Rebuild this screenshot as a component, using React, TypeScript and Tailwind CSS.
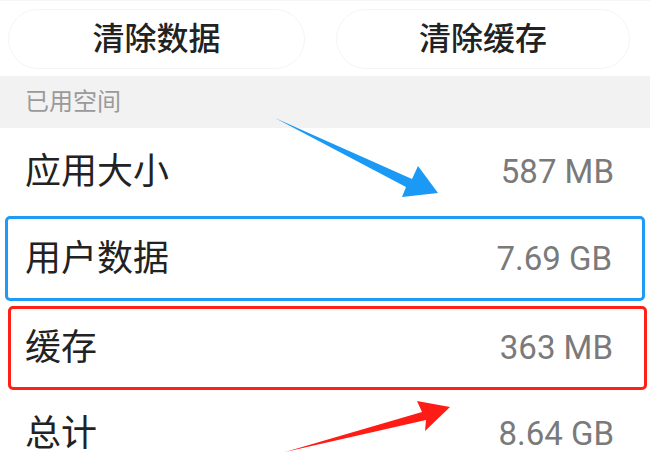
import React from "react";

const rows = [
  { label: "应用大小", value: "587 MB", frame: "none" },
  { label: "用户数据", value: "7.69 GB", frame: "blue" },
  { label: "缓存", value: "363 MB", frame: "red" },
  { label: "总计", value: "8.64 GB", frame: "none" },
] as const;

function Row({ label, value, frame }: (typeof rows)[number]) {
  if (frame === "blue") {
    return (
      <div className="mx-[5px] flex h-[85px] items-center justify-between rounded-[5px] border-[3px] border-[#1e9bf5] pl-[17px] pr-[30px]">
        <span className="text-[36px] text-[#222]">{label}</span>
        <span className="text-[33px] text-[#7a7a7a]">{value}</span>
      </div>
    );
  }
  if (frame === "red") {
    return (
      <div className="ml-[8px] mr-[3px] mt-[5px] flex h-[84px] items-center justify-between rounded-[5px] border-[3px] border-[#ff2118] pl-[14px] pr-[31px]">
        <span className="text-[36px] text-[#222]">{label}</span>
        <span className="text-[33px] text-[#7a7a7a]">{value}</span>
      </div>
    );
  }
  return (
    <div className="flex h-[88px] items-center justify-between pl-[25px] pr-[36px]">
      <span className="text-[36px] text-[#222]">{label}</span>
      <span className="text-[33px] text-[#7a7a7a]">{value}</span>
    </div>
  );
}

export default function App() {
  return (
    <div
      className="relative h-[476px] w-[650px] overflow-hidden bg-white"
      style={{ fontFamily: "Roboto, 'Noto Sans CJK SC', sans-serif" }}
    >
      {/* Action buttons */}
      <div className="flex h-[76px] items-center gap-[31px] border-t border-[#f6f6f6] pl-[8px] pr-[20px]">
        <button className="flex h-[60px] w-[297px] items-center justify-center rounded-[30px] border border-[#f5f5f5] text-[32px] font-medium text-[#222]">
          清除数据
        </button>
        <button className="flex h-[60px] w-[294px] items-center justify-center rounded-[30px] border border-[#f5f5f5] text-[32px] font-medium text-[#222]">
          清除缓存
        </button>
      </div>

      {/* Section header */}
      <div className="flex h-[52px] items-center bg-[#f2f2f2] pl-[25px] text-[24px] text-[#9a9a9a]">
        已用空间
      </div>

      {/* Storage rows */}
      <div className="flex flex-col">
        {rows.map((r) => (
          <Row key={r.label} {...r} />
        ))}
      </div>

      {/* Annotation arrows */}
      <svg
        className="pointer-events-none absolute left-0 top-0"
        width="650"
        height="476"
        viewBox="0 0 650 476"
      >
        <polygon
          points="275,118 412,179 418,166 438,193 402,197 406,187"
          fill="#1b9af5"
        />
        <polygon
          points="285,452 422,412 417,401 450,407 425,431 426,420"
          fill="#ff1c14"
        />
      </svg>
    </div>
  );
}
